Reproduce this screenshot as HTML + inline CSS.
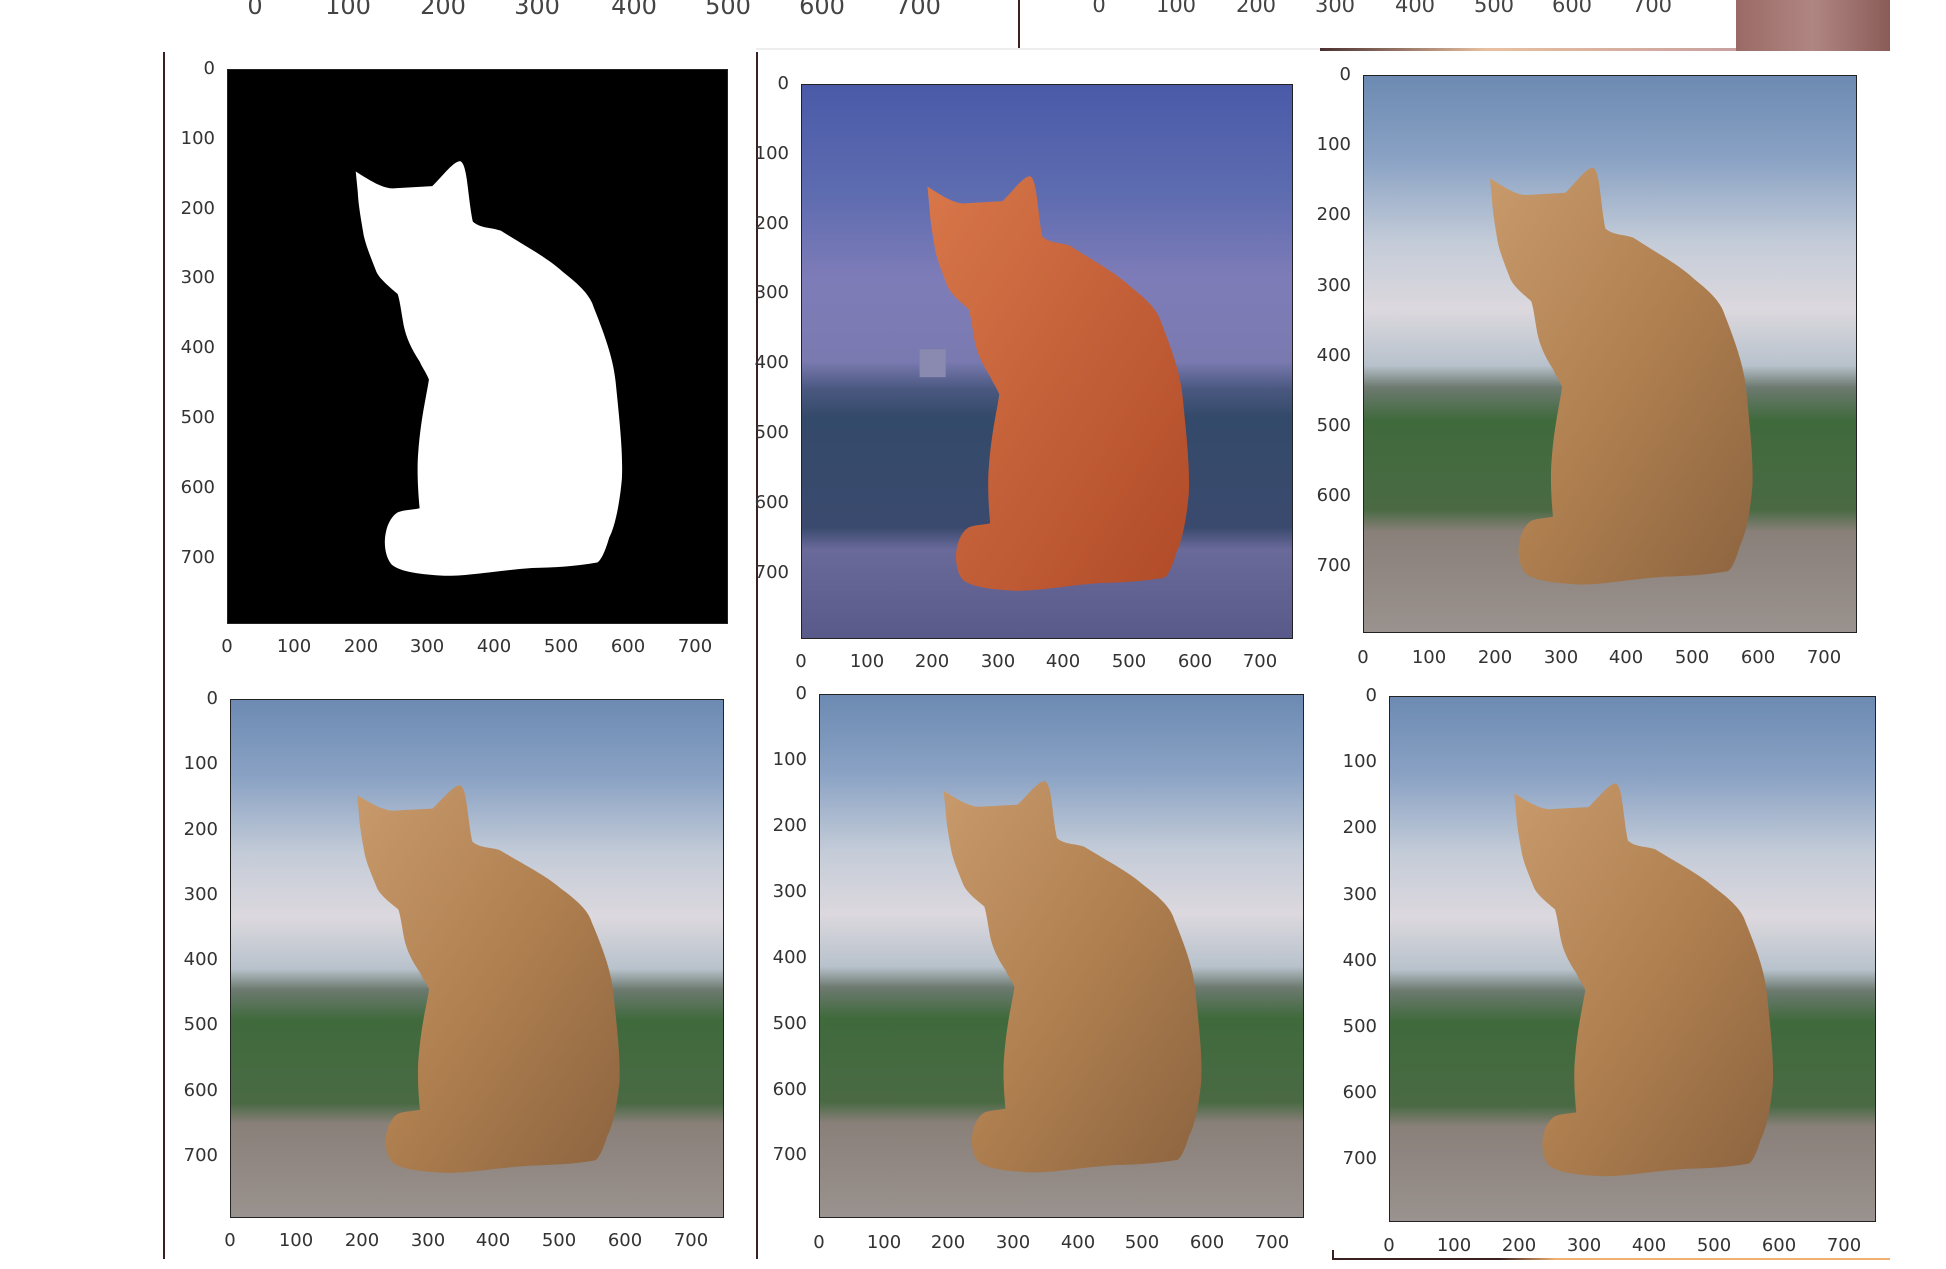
<!DOCTYPE html>
<html><head><meta charset="utf-8"><style>
body{margin:0;width:1946px;height:1269px;background:#fff;position:relative;overflow:hidden;font-family:"DejaVu Sans","Liberation Sans",sans-serif;color:#333}
.p{position:absolute;border:1.5px solid #222;box-sizing:border-box;overflow:hidden}
.p svg{position:absolute;left:0;top:0;width:100%;height:100%}
.yl{position:absolute;width:50px;text-align:right;font-size:18px;line-height:20px;margin-top:-10px}
.xl{position:absolute;width:60px;text-align:center;font-size:18px;line-height:20px}
.t{position:absolute;font-size:24px;line-height:28px;color:#444;transform:translateX(-50%)}
.vl{position:absolute;width:2px;background:#3a2020}
</style></head><body>
<svg width="0" height="0" style="position:absolute">
<defs>
<path id="cat" d="M192,146 C215,160 235,172 251,170 L307,167 C325,150 338,132 349,131 C360,135 360,180 368,218 C380,228 395,226 410,231 C450,255 480,270 503,290 C530,310 545,325 550,342 C570,390 580,420 583,452 C588,500 594,550 592,588 C588,630 580,660 573,672 C566,695 560,705 555,708 C520,714 490,715 457,716 C400,720 360,728 325,727 C290,725 260,722 246,711 C236,700 234,680 237,666 C240,650 248,640 255,636 C265,632 280,632 288,630 C285,600 284,570 286,549 C290,500 298,470 302,445 C298,435 292,428 288,419 C275,400 268,385 264,367 C260,345 258,330 255,322 C240,310 228,300 223,290 C215,270 208,255 204,238 C200,215 196,195 195,175 Z"/>
<linearGradient id="sky" x1="0" y1="0" x2="0" y2="1">
<stop offset="0" stop-color="#6c8ab2"/><stop offset="0.15" stop-color="#8aa2c4"/><stop offset="0.3" stop-color="#c4ccd8"/><stop offset="0.42" stop-color="#dcd8de"/><stop offset="0.52" stop-color="#b8c2cc"/><stop offset="0.56" stop-color="#6d7a70"/><stop offset="0.62" stop-color="#3f6a3c"/><stop offset="0.78" stop-color="#4a6a44"/><stop offset="0.82" stop-color="#8a807a"/><stop offset="1" stop-color="#9a928e"/>
</linearGradient>
<linearGradient id="ov" x1="0" y1="0" x2="0" y2="1">
<stop offset="0" stop-color="#4a5aa8"/><stop offset="0.2" stop-color="#5e6cb0"/><stop offset="0.35" stop-color="#7e7cb8"/><stop offset="0.5" stop-color="#7a7ab0"/><stop offset="0.55" stop-color="#4a5880"/><stop offset="0.6" stop-color="#344a6a"/><stop offset="0.8" stop-color="#3a4a6e"/><stop offset="0.84" stop-color="#6a6a9a"/><stop offset="1" stop-color="#5a5a8a"/>
</linearGradient>
<linearGradient id="fur" x1="0" y1="0" x2="1" y2="1">
<stop offset="0" stop-color="#c89a6c"/><stop offset="0.5" stop-color="#b08050"/><stop offset="1" stop-color="#8c6440"/>
</linearGradient>
<linearGradient id="ofur" x1="0" y1="0" x2="1" y2="1">
<stop offset="0" stop-color="#d8774a"/><stop offset="1" stop-color="#b04a28"/>
</linearGradient>
</defs></svg>

<!-- top remnants -->
<div class="t" style="left:255px;top:-8px">0</div><div class="t" style="left:348px;top:-8px">100</div><div class="t" style="left:443px;top:-8px">200</div><div class="t" style="left:537px;top:-8px">300</div><div class="t" style="left:634px;top:-8px">400</div><div class="t" style="left:728px;top:-8px">500</div><div class="t" style="left:822px;top:-8px">600</div><div class="t" style="left:918px;top:-8px">700</div>
<div class="t" style="left:1099px;top:-9px;font-size:21px">0</div><div class="t" style="left:1176px;top:-9px;font-size:21px">100</div><div class="t" style="left:1256px;top:-9px;font-size:21px">200</div><div class="t" style="left:1335px;top:-9px;font-size:21px">300</div><div class="t" style="left:1415px;top:-9px;font-size:21px">400</div><div class="t" style="left:1494px;top:-9px;font-size:21px">500</div><div class="t" style="left:1572px;top:-9px;font-size:21px">600</div><div class="t" style="left:1652px;top:-9px;font-size:21px">700</div>
<div style="position:absolute;left:1736px;top:0;width:154px;height:51px;background:linear-gradient(90deg,#9a6a66,#b08682 50%,#8a5c58)"></div>
<div style="position:absolute;left:1320px;top:48px;width:416px;height:3px;background:linear-gradient(90deg,#4a3030,#e8c0a0 40%,#c8a0a0)"></div>
<div style="position:absolute;left:756px;top:48px;width:564px;height:2px;background:#eee"></div>
<div class="vl" style="left:1018px;top:0;height:48px"></div>
<div class="vl" style="left:163px;top:52px;height:1207px"></div>
<div class="vl" style="left:756px;top:52px;height:1207px;width:1.5px"></div>
<div style="position:absolute;left:1332px;top:1258px;width:558px;height:2px;background:linear-gradient(90deg,#3a2020 30%,#f0b070 40%)"></div>
<div class="vl" style="left:1332px;top:1250px;height:10px"></div>

<!-- Panel 1 mask -->
<div class="p" style="left:227px;top:69px;width:501px;height:555px;background:#000"><svg viewBox="0 0 750 795" preserveAspectRatio="none"><use href="#cat" fill="#fff"/></svg></div>
<div class="yl" style="left:165px;top:69px">0</div><div class="yl" style="left:165px;top:139px">100</div><div class="yl" style="left:165px;top:209px">200</div><div class="yl" style="left:165px;top:278px">300</div><div class="yl" style="left:165px;top:348px">400</div><div class="yl" style="left:165px;top:418px">500</div><div class="yl" style="left:165px;top:488px">600</div><div class="yl" style="left:165px;top:558px">700</div>
<div class="xl" style="left:197px;top:637px">0</div><div class="xl" style="left:264px;top:637px">100</div><div class="xl" style="left:331px;top:637px">200</div><div class="xl" style="left:397px;top:637px">300</div><div class="xl" style="left:464px;top:637px">400</div><div class="xl" style="left:531px;top:637px">500</div><div class="xl" style="left:598px;top:637px">600</div><div class="xl" style="left:665px;top:637px">700</div>

<!-- Panel 2 overlay -->
<div class="p" style="left:801px;top:84px;width:492px;height:555px"><svg viewBox="0 0 750 795" preserveAspectRatio="none"><rect width="750" height="795" fill="url(#ov)"/><rect x="180" y="380" width="40" height="40" fill="#8a8ab0"/><use href="#cat" fill="url(#ofur)"/></svg></div>
<div class="yl" style="left:739px;top:84px">0</div><div class="yl" style="left:739px;top:154px">100</div><div class="yl" style="left:739px;top:224px">200</div><div class="yl" style="left:739px;top:293px">300</div><div class="yl" style="left:739px;top:363px">400</div><div class="yl" style="left:739px;top:433px">500</div><div class="yl" style="left:739px;top:503px">600</div><div class="yl" style="left:739px;top:573px">700</div>
<div class="xl" style="left:771px;top:652px">0</div><div class="xl" style="left:837px;top:652px">100</div><div class="xl" style="left:902px;top:652px">200</div><div class="xl" style="left:968px;top:652px">300</div><div class="xl" style="left:1033px;top:652px">400</div><div class="xl" style="left:1099px;top:652px">500</div><div class="xl" style="left:1165px;top:652px">600</div><div class="xl" style="left:1230px;top:652px">700</div>

<!-- Panel 3 -->
<div class="p" style="left:1363px;top:75px;width:494px;height:558px"><svg viewBox="0 0 750 795" preserveAspectRatio="none"><rect width="750" height="795" fill="url(#sky)"/><use href="#cat" fill="url(#fur)"/></svg></div>
<div class="yl" style="left:1301px;top:75px">0</div><div class="yl" style="left:1301px;top:145px">100</div><div class="yl" style="left:1301px;top:215px">200</div><div class="yl" style="left:1301px;top:286px">300</div><div class="yl" style="left:1301px;top:356px">400</div><div class="yl" style="left:1301px;top:426px">500</div><div class="yl" style="left:1301px;top:496px">600</div><div class="yl" style="left:1301px;top:566px">700</div>
<div class="xl" style="left:1333px;top:648px">0</div><div class="xl" style="left:1399px;top:648px">100</div><div class="xl" style="left:1465px;top:648px">200</div><div class="xl" style="left:1531px;top:648px">300</div><div class="xl" style="left:1596px;top:648px">400</div><div class="xl" style="left:1662px;top:648px">500</div><div class="xl" style="left:1728px;top:648px">600</div><div class="xl" style="left:1794px;top:648px">700</div>

<!-- Panel 4 -->
<div class="p" style="left:230px;top:699px;width:494px;height:519px"><svg viewBox="0 0 750 795" preserveAspectRatio="none"><rect width="750" height="795" fill="url(#sky)"/><use href="#cat" fill="url(#fur)"/></svg></div>
<div class="yl" style="left:168px;top:699px">0</div><div class="yl" style="left:168px;top:764px">100</div><div class="yl" style="left:168px;top:830px">200</div><div class="yl" style="left:168px;top:895px">300</div><div class="yl" style="left:168px;top:960px">400</div><div class="yl" style="left:168px;top:1025px">500</div><div class="yl" style="left:168px;top:1091px">600</div><div class="yl" style="left:168px;top:1156px">700</div>
<div class="xl" style="left:200px;top:1231px">0</div><div class="xl" style="left:266px;top:1231px">100</div><div class="xl" style="left:332px;top:1231px">200</div><div class="xl" style="left:398px;top:1231px">300</div><div class="xl" style="left:463px;top:1231px">400</div><div class="xl" style="left:529px;top:1231px">500</div><div class="xl" style="left:595px;top:1231px">600</div><div class="xl" style="left:661px;top:1231px">700</div>

<!-- Panel 5 -->
<div class="p" style="left:819px;top:694px;width:485px;height:524px"><svg viewBox="0 0 750 795" preserveAspectRatio="none"><rect width="750" height="795" fill="url(#sky)"/><use href="#cat" fill="url(#fur)"/></svg></div>
<div class="yl" style="left:757px;top:694px">0</div><div class="yl" style="left:757px;top:760px">100</div><div class="yl" style="left:757px;top:826px">200</div><div class="yl" style="left:757px;top:892px">300</div><div class="yl" style="left:757px;top:958px">400</div><div class="yl" style="left:757px;top:1024px">500</div><div class="yl" style="left:757px;top:1090px">600</div><div class="yl" style="left:757px;top:1155px">700</div>
<div class="xl" style="left:789px;top:1233px">0</div><div class="xl" style="left:854px;top:1233px">100</div><div class="xl" style="left:918px;top:1233px">200</div><div class="xl" style="left:983px;top:1233px">300</div><div class="xl" style="left:1048px;top:1233px">400</div><div class="xl" style="left:1112px;top:1233px">500</div><div class="xl" style="left:1177px;top:1233px">600</div><div class="xl" style="left:1242px;top:1233px">700</div>

<!-- Panel 6 -->
<div class="p" style="left:1389px;top:696px;width:487px;height:526px"><svg viewBox="0 0 750 795" preserveAspectRatio="none"><rect width="750" height="795" fill="url(#sky)"/><use href="#cat" fill="url(#fur)"/></svg></div>
<div class="yl" style="left:1327px;top:696px">0</div><div class="yl" style="left:1327px;top:762px">100</div><div class="yl" style="left:1327px;top:828px">200</div><div class="yl" style="left:1327px;top:895px">300</div><div class="yl" style="left:1327px;top:961px">400</div><div class="yl" style="left:1327px;top:1027px">500</div><div class="yl" style="left:1327px;top:1093px">600</div><div class="yl" style="left:1327px;top:1159px">700</div>
<div class="xl" style="left:1359px;top:1236px">0</div><div class="xl" style="left:1424px;top:1236px">100</div><div class="xl" style="left:1489px;top:1236px">200</div><div class="xl" style="left:1554px;top:1236px">300</div><div class="xl" style="left:1619px;top:1236px">400</div><div class="xl" style="left:1684px;top:1236px">500</div><div class="xl" style="left:1749px;top:1236px">600</div><div class="xl" style="left:1814px;top:1236px">700</div>
</body></html>
